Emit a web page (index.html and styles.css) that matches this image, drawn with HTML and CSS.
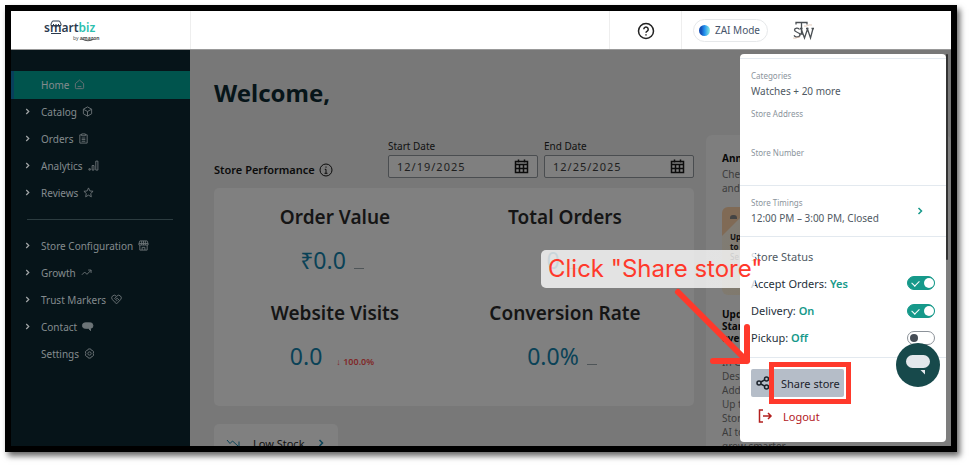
FILE: index.html
```html
<!DOCTYPE html>
<html lang="en">
<head>
    <meta charset="UTF-8">
    <meta name="viewport" content="width=device-width, initial-scale=1.0">
    <title>Smartbiz Dashboard</title>
    <link rel="stylesheet" href="styles.css">
</head>
<body>
<div class="frame">
    <!-- Top bar -->
    <header class="topbar">
        <div class="brand">
            <svg class="brand-roof" viewBox="0 0 12 14"><path d="M1 4 2.500 1h7L11 4M1 4v1.500h2.500V4M3.500 5.500H6V4M6 5.500h2.500V4M8.500 5.500H11V4M1 13.500h10"/></svg>
            <div class="brand-name">smart<span>biz</span></div>
            <div class="brand-by">by <b>amazon</b></div>
            <svg class="brand-smile" viewBox="0 0 14 4"><path d="M1 1q6 3.500 12 0"/></svg>
        </div>
        <button class="help" aria-label="Help">
            <svg viewBox="0 0 18 18"><circle cx="9" cy="9" r="7.500"/><path d="M6.800 7.200a2.200 2.200 0 1 1 3.400 1.900c-.9.5-1.200.9-1.200 1.700"/><path d="M9 12.300v1.200"/></svg>
        </button>
        <div class="account">
            <button class="zai"><span class="zai-dot"></span>ZAI Mode</button>
            <svg class="avatar" viewBox="0 0 22 22"><path d="M4 5.500V3.500h11v2M9.500 3.500V15M8 15h3"/><path d="M7.500 10.500c-1-2-5-1.700-5 .6 0 2.600 5.500 1.700 5.500 4.700 0 2.700-4.700 3-6 .6M9 9.500l3.500 9.500L15.500 10l3 9L21 9.500M8 9.500h2.500M14 9.500h2.500M19.500 9.500H22"/><path class="avatar-line" d="M12 7c3 1 4-2 8-1M1 19c3 1 4-1 7-1"/></svg>
        </div>
    </header>

    <div class="body">
        <!-- Sidebar -->
        <nav class="sidebar">
            <a class="nav-item active" href="#"><span class="nav-arrow"></span>Home
                <svg class="icon" viewBox="0 0 12 12"><path d="M1.500 5 6 1.200 10.500 5v4.500a1 1 0 0 1-1 1h-7a1 1 0 0 1-1-1zM4 8.300h4"/></svg></a>
            <a class="nav-item" href="#"><svg class="nav-arrow" viewBox="0 0 6 8"><path d="m1.500 1 3 3-3 3"/></svg>Catalog
                <svg class="icon" viewBox="0 0 12 12"><path d="M6 1 10.500 3.500v5L6 11 1.500 8.500v-5zM1.500 3.500 6 6l4.500-2.500M6 6v5"/></svg></a>
            <a class="nav-item" href="#"><svg class="nav-arrow" viewBox="0 0 6 8"><path d="m1.500 1 3 3-3 3"/></svg>Orders
                <svg class="icon" viewBox="0 0 12 12"><path d="M4 2H2v9h8V2H8M4 1h4v2H4zM4 5.500h4M4 7.200h4M4 9h4"/></svg></a>
            <a class="nav-item" href="#"><svg class="nav-arrow" viewBox="0 0 6 8"><path d="m1.500 1 3 3-3 3"/></svg>Analytics
                <svg class="icon" viewBox="0 0 12 12"><path d="M1 9.500h1.500V11H1zM4.500 6h2v5h-2zM8.500 1.200h2.300V11H8.500z"/></svg></a>
            <a class="nav-item" href="#"><svg class="nav-arrow" viewBox="0 0 6 8"><path d="m1.500 1 3 3-3 3"/></svg>Reviews
                <svg class="icon" viewBox="0 0 12 12"><path d="m6 1 1.500 3.300 3.500.4-2.600 2.400.7 3.600L6 8.900l-3.100 1.800.7-3.600L1 4.700l3.500-.4z"/></svg></a>
            <hr class="nav-line">
            <a class="nav-item" href="#"><svg class="nav-arrow" viewBox="0 0 6 8"><path d="m1.500 1 3 3-3 3"/></svg>Store Configuration
                <svg class="icon" viewBox="0 0 12 12"><path d="M2 1h8l1 3v1.500H1V4zM1 3.800h10M4 1v4.500M6 1v4.500M8 1v4.500M2 5.500V11h8V5.500M4.500 11V8h3v3"/></svg></a>
            <a class="nav-item" href="#"><svg class="nav-arrow" viewBox="0 0 6 8"><path d="m1.500 1 3 3-3 3"/></svg>Growth
                <svg class="icon" viewBox="0 0 12 12"><path d="m1 8.500 3-3 2.500 2.500L11 3.500M7.800 3.300H11v3.200"/></svg></a>
            <a class="nav-item" href="#"><svg class="nav-arrow" viewBox="0 0 6 8"><path d="m1.500 1 3 3-3 3"/></svg>Trust Markers
                <svg class="icon" viewBox="0 0 12 12"><path d="M6 10.800 1.600 6.200a2.800 2.800 0 0 1 4-4L6 2.600l.4-.4a2.800 2.800 0 0 1 4 4zM6 2.800 4 5l1 1 1.800-1.300 2.200 2M5.500 8 7 6.500"/></svg></a>
            <a class="nav-item" href="#"><svg class="nav-arrow" viewBox="0 0 6 8"><path d="m1.500 1 3 3-3 3"/></svg>Contact
                <svg class="icon solid" viewBox="0 0 12 12"><path d="M3.500 2h5a3 3 0 0 1 .8 6v2.500L7 8H3.500a3 3 0 0 1 0-6z"/></svg></a>
            <a class="nav-item" href="#"><span class="nav-arrow"></span>Settings
                <svg class="icon" viewBox="0 0 12 12"><circle cx="6" cy="6" r="1.800"/><path d="m4.800 1h2.400l.6 1.300 1.500.4 1.200 1.600-.5 1.700.5 1.700-1.200 1.600-1.500.4L7.200 11H4.800l-.6-1.300-1.500-.4-1.200-1.600L2 6l-.5-1.700 1.200-1.600 1.500-.4z"/></svg></a>
        </nav>

        <!-- Dashboard -->
        <main class="main">
            <h1>Welcome,</h1>
            <div class="columns">
                <section class="performance">
                    <div class="filters">
                        <h2>Store Performance
                            <svg class="info" viewBox="0 0 14 14"><circle cx="7" cy="7" r="6"/><path d="M7 3.500v1.200M5.800 6.300H7v4M5.500 10.300h3"/></svg>
                        </h2>
                        <div class="field">
                            <label for="start-date">Start Date</label>
                            <div class="date-box">
                                <input type="text" id="start-date" value="12/19/2025">
                                <svg class="calendar" viewBox="0 0 15 15"><path d="M1.500 2.500h12v11h-12zM1.500 5.500h12M1.500 9.500h12M5.500 5v8.500M9.500 5v8.500M4.500.500v3M10.500.500v3"/></svg>
                            </div>
                        </div>
                        <div class="field">
                            <label for="end-date">End Date</label>
                            <div class="date-box">
                                <input type="text" id="end-date" value="12/25/2025">
                                <svg class="calendar" viewBox="0 0 15 15"><path d="M1.500 2.500h12v11h-12zM1.500 5.500h12M1.500 9.500h12M5.500 5v8.500M9.500 5v8.500M4.500.500v3M10.500.500v3"/></svg>
                            </div>
                        </div>
                    </div>
                    <div class="stats">
                        <div class="stat">
                            <h3>Order Value</h3>
                            <div class="value">₹0.0 <span class="flat"></span></div>
                        </div>
                        <div class="stat">
                            <h3>Total Orders</h3>
                            <div class="value">0 <span class="flat"></span></div>
                        </div>
                        <div class="stat">
                            <h3>Website Visits</h3>
                            <div class="value">0.0 <span class="drop">↓ 100.0%</span></div>
                        </div>
                        <div class="stat">
                            <h3>Conversion Rate</h3>
                            <div class="value">0.0% <span class="flat"></span></div>
                        </div>
                    </div>
                    <button class="low-stock">
                        <svg viewBox="0 0 14 10"><path d="m1 2 3 3.500L6.500 3 12 8M13 3.500V8.500H8.500"/></svg>
                        Low Stock
                        <svg class="go" viewBox="0 0 6 8"><path d="m1.500 1 3 3-3 3"/></svg>
                    </button>
                </section>
                <aside class="news">
                    <h4>Announcements</h4>
                    <p>Check out<br>and more</p>
                    <div class="news-card">
                        <span class="news-cloud"></span>
                        <b>Up<br>to</b>
                        <span>Se</span>
                    </div>
                    <h4>Update<br>Start<br>every</h4>
                    <p class="news-list">In Ca<br>Des<br>Add<br>Up to<br>Store<br>AI to<br>grow smarter</p>
                </aside>
            </div>
        </main>
    </div>

    <!-- Store menu -->
    <section class="panel">
        <div class="panel-block details">
            <small>Categories</small>
            <p>Watches + 20 more</p>
            <small class="address">Store Address</small>
            <small>Store Number</small>
        </div>
        <div class="panel-block timings">
            <div>
                <small>Store Timings</small>
                <p>12:00 PM – 3:00 PM, Closed</p>
            </div>
            <svg class="go" viewBox="0 0 6 8"><path d="m1.500 1 3 3-3 3"/></svg>
        </div>
        <div class="panel-block status">
            <h5>Store Status</h5>
            <div class="toggle-row">
                <label for="accept">Accept Orders: <b>Yes</b></label>
                <input type="checkbox" class="toggle" id="accept" checked>
            </div>
            <div class="toggle-row">
                <label for="delivery">Delivery: <b>On</b></label>
                <input type="checkbox" class="toggle" id="delivery" checked>
            </div>
            <div class="toggle-row">
                <label for="pickup">Pickup: <b>Off</b></label>
                <input type="checkbox" class="toggle" id="pickup">
            </div>
        </div>
        <div class="panel-block actions">
            <button class="share">
                <svg viewBox="0 0 14 14"><circle cx="3" cy="7" r="2"/><circle cx="10.500" cy="3" r="2"/><circle cx="10.500" cy="11" r="2"/><path d="m4.800 6 4-2.100M4.800 8l4 2.100"/></svg>
                Share store
            </button>
            <button class="logout">
                <svg viewBox="0 0 14 14"><path d="M5 1H1.500v12H5M5 7h8M10 4l3 3-3 3"/></svg>
                Logout
            </button>
        </div>
    </section>
    <span class="scrollbar"></span>

    <button class="chat" aria-label="Chat">
        <svg viewBox="0 0 24 20"><path d="M6.500 0h11a6.500 6.500 0 0 1 0 13h-11a6.500 6.500 0 0 1 0-13zM14.500 15H19v4.500z"/></svg>
    </button>

    <!-- Guide overlay -->
    <div class="callout">Click "Share store"</div>
    <svg class="arrow" viewBox="0 0 80 80"><path d="m4 5 69 69M73 40v34H39"/></svg>
    <span class="highlight"></span>
</div>
</body>
</html>
```

FILE: styles.css
```css
* {
    box-sizing: border-box;
    margin: 0;
    padding: 0;
    font-family: "Noto Sans", "Open Sans", sans-serif;
}

body {
    padding: 5px 13px 13px 5px;
    background: #fff;
    font-size: 10px;
}

svg {
    fill: none;
    stroke: currentColor;
    overflow: visible;
    flex-shrink: 0;
}

button {
    border: none;
    background: none;
    cursor: pointer;
}

.frame {
    position: relative;
    height: calc(100vh - 18px);
    display: flex;
    flex-direction: column;
    border: 6px solid #000;
    background: #797979;
    box-shadow: 3px 4px 6px rgba(0, 0, 0, 0.6);
    overflow: hidden;
}

/* Top bar */
.topbar {
    height: 39px;
    display: flex;
    flex-shrink: 0;
    background: #fff;
    border-bottom: 1px solid #999;
}

.brand {
    position: relative;
    width: 180px;
    padding: 10px 0 0 33px;
    border-right: 1px solid #eee;
    margin-right: auto;
}

.brand-name {
    font-size: 12px;
    line-height: 14px;
    font-weight: 600;
    color: #2b3a4d;
}

.brand-name span {
    color: #2cc0ae;
}

.brand-by {
    padding-left: 29px;
    font-size: 5px;
    line-height: 6px;
    color: #555;
}

.brand-roof {
    position: absolute;
    left: 39px;
    top: 9px;
    width: 12px;
    height: 14px;
    color: #2b3a4d;
}

.brand-smile {
    position: absolute;
    left: 70px;
    top: 27px;
    width: 14px;
    height: 4px;
    color: #555;
}

.help {
    width: 73px;
    border-left: 1px solid #eee;
    border-right: 1px solid #eee;
    color: #222;
}

.help svg {
    width: 18px;
    height: 18px;
    stroke-width: 1.5;
    vertical-align: middle;
}

.account {
    width: 269px;
    padding-left: 11px;
    display: flex;
    align-items: center;
    gap: 24px;
}

.zai {
    display: flex;
    align-items: center;
    gap: 5px;
    height: 23px;
    padding: 0 7px 0 5px;
    border: 1px solid #e6e8ea;
    border-radius: 12px;
    font-size: 10px;
    color: #46546a;
}

.zai-dot {
    width: 11px;
    height: 11px;
    border-radius: 50%;
    background: linear-gradient(90deg, #1450b8 20%, #2290ee 50%, #8ff0e0);
}

.avatar {
    width: 22px;
    height: 22px;
    stroke-width: 1.3;
    color: #4b5054;
}

.avatar-line {
    stroke: #d8b8a0;
    stroke-width: 0.7;
}

.body {
    display: flex;
    flex: 1;
    min-height: 0;
}

/* Sidebar */
.sidebar {
    width: 179px;
    flex-shrink: 0;
    padding-top: 21px;
    background: #061419;
}

.nav-item {
    display: flex;
    align-items: center;
    height: 28px;
    padding-left: 14px;
    color: #848b8e;
    font-size: 10px;
    text-decoration: none;
    margin-bottom: -1px;
    padding-bottom: 1px;
}

.nav-item.active {
    background: #00544d;
    box-shadow: inset 5px 0 0 -2px #083f5c;
    margin-bottom: -1px;
}

.nav-arrow {
    width: 5px;
    height: 7px;
    margin-right: 11px;
    stroke-width: 1.5;
    color: #a0a4a6;
}

.icon {
    width: 11px;
    height: 11px;
    margin-left: 5px;
    color: #6c7477;
}

.icon.solid {
    fill: currentColor;
}

.nav-line {
    margin: 13px 17px 12px 16px;
    border: none;
    border-top: 1px solid #2c3c40;
}

/* Dashboard */
.main {
    flex: 1;
    min-width: 0;
    padding: 27px 0 0 24px;
    background: #787878;
    overflow: hidden;
}

h1 {
    font-size: 24px;
    line-height: 32px;
    font-weight: 700;
    color: #071519;
}

.columns {
    display: flex;
    gap: 12px;
}

.performance {
    width: 480px;
    padding-top: 30px;
    flex-shrink: 0;
}

.filters {
    display: flex;
    align-items: flex-end;
    gap: 6px;
}

h2 {
    flex: 1;
    display: flex;
    align-items: center;
    gap: 4px;
    font-size: 11px;
    line-height: 16px;
    font-weight: 600;
    color: #0b0b0b;
    white-space: nowrap;
}

.info {
    width: 14px;
    height: 14px;
}

.field {
    width: 150px;
}

.field label {
    display: block;
    font-size: 10px;
    line-height: 14px;
    color: #111;
    margin-bottom: 2px;
}

.date-box {
    display: flex;
    align-items: center;
    height: 23px;
    padding: 0 8px;
    border: 1px solid #4a4d50;
    border-radius: 2px;
    background: #7f7f7f;
}

.date-box input {
    flex: 1;
    min-width: 0;
    border: none;
    background: none;
    font-size: 11px;
    letter-spacing: 1px;
    color: #1e1e1e;
}

.calendar {
    width: 15px;
    height: 15px;
    stroke-width: 1.5;
    color: #0c0c0c;
}

.stats {
    display: grid;
    grid-template-columns: 1fr 1fr;
    margin-top: 10px;
    padding: 15px 14px 11px 6px;
    border-radius: 5px;
    background: #808080;
}

.stat {
    height: 96px;
    text-align: center;
}

.stat h3 {
    font-size: 19px;
    line-height: 28px;
    font-weight: 600;
    color: #151515;
}

.value {
    display: flex;
    justify-content: center;
    align-items: baseline;
    gap: 8px;
    margin-top: 14px;
    padding-right: 6px;
    font-size: 23px;
    line-height: 30px;
    color: #0a4257;
}

.flat {
    width: 10px;
    height: 1px;
    background: #4f5558;
}

.drop {
    margin-left: 6px;
    font-size: 9px;
    font-weight: 600;
    color: #802828;
}

.low-stock {
    display: flex;
    align-items: center;
    gap: 13px;
    height: 38px;
    margin-top: 18px;
    padding: 0 14px 0 12px;
    border-radius: 5px;
    background: #808080;
    font-size: 11px;
    color: #111;
}

.low-stock svg {
    width: 14px;
    height: 10px;
    color: #0a4257;
}

.low-stock .go {
    width: 6px;
    height: 8px;
    stroke-width: 1.5;
}

.news {
    flex: 1;
    margin-top: 26px;
    align-self: flex-start;
    padding: 4px 16px 0;
    border-radius: 6px;
    background: #7e7e7e;
}

.news h4 {
    padding-top: 13px;
    font-size: 10px;
    line-height: 12px;
    color: #080808;
}

.news p {
    color: #3c3c3c;
    line-height: 14px;
}

.news > p:first-of-type {
    margin-top: 3px;
}

.news-card {
    height: 88px;
    margin-top: 12px;
    padding: 8px;
    border-radius: 6px;
    background: linear-gradient(135deg, #806a55 20px, #807c74 21px, #80725d);
    font-size: 8px;
    line-height: 10px;
    color: #111;
}

.news-cloud {
    display: block;
    width: 7px;
    height: 4px;
    margin-bottom: 13px;
    border-radius: 3px 3px 0 0;
    background: #444;
}

.news-card b {
    display: block;
}

.news .news-list {
    margin-top: 11px;
    padding-bottom: 10px;
}

/* Store menu */
.panel {
    position: absolute;
    top: 43px;
    right: 5px;
    width: 206px;
    padding-top: 4px;
    border-radius: 4px;
    background: #fff;
    color: #4f5963;
}

.panel-block {
    padding: 0 11px;
    border-top: 1px solid #e3e9ef;
}

.panel small {
    display: block;
    font-size: 8px;
    line-height: 12px;
    color: #8b949c;
}

.panel p {
    font-size: 10px;
    line-height: 16px;
    margin-top: 1px;
}

.details {
    height: 127px;
    padding-top: 11px;
}

.details .address {
    margin: 9px 0 27px;
}

.timings {
    display: flex;
    justify-content: space-between;
    align-items: center;
    height: 51px;
    padding-right: 23px;
}

.panel .go {
    width: 6px;
    height: 8px;
    stroke-width: 1.5;
    color: #16998a;
}

.status {
    height: 121px;
    padding-top: 12px;
}

.status h5 {
    font-size: 11px;
    line-height: 16px;
    font-weight: 400;
    margin-bottom: 4px;
}

.toggle-row {
    display: flex;
    justify-content: space-between;
    align-items: center;
    height: 28px;
    font-size: 11px;
    color: #26303a;
}

.toggle-row + .toggle-row {
    height: 27px;
}

.toggle-row b {
    font-weight: 600;
    color: #16998a;
}

.toggle {
    appearance: none;
    position: relative;
    width: 28px;
    height: 14px;
    border: 1px solid #8c9299;
    border-radius: 7px;
    background: #fff;
}

.toggle::after {
    content: "";
    position: absolute;
    left: 2px;
    top: 2px;
    width: 8px;
    height: 8px;
    border-radius: 50%;
    background: #454c55;
}

.toggle:checked {
    border-color: #16998a;
    background: #16998a;
}

.toggle:checked::after {
    left: 16px;
    top: 1px;
    width: 10px;
    height: 10px;
    background: #fff;
}

.toggle:checked::before {
    content: "";
    position: absolute;
    left: 4px;
    top: 3px;
    width: 6px;
    height: 4px;
    border-left: 1px solid #fff;
    border-bottom: 1px solid #fff;
    transform: rotate(-45deg);
}

.actions {
    padding-top: 11px;
    padding-bottom: 12px;
    display: flex;
    flex-direction: column;
    align-items: flex-start;
    gap: 5px;
}

.actions button {
    display: flex;
    align-items: center;
    gap: 11px;
    font-size: 11px;
}

.actions svg {
    width: 14px;
    height: 14px;
    stroke-width: 1.5;
}

.share {
    height: 28px;
    padding: 0 4px 0 5px;
    border-radius: 2px;
    background: #b5bdc8;
    color: #1c232b;
}

.logout {
    height: 28px;
    padding-left: 7px;
    color: #b3201f;
}

.scrollbar {
    position: absolute;
    top: 43px;
    right: 3px;
    width: 2px;
    height: 206px;
    border-radius: 2px;
    background: #333;
}

.chat {
    position: absolute;
    right: 11px;
    bottom: 59px;
    width: 44px;
    height: 44px;
    border-radius: 50%;
    background: #17494b;
}

.chat svg {
    width: 24px;
    height: 20px;
    fill: #e4e8ec;
    stroke: none;
    vertical-align: middle;
}

/* Guide overlay */
.callout {
    position: absolute;
    right: 187px;
    top: 239px;
    width: 223px;
    height: 38px;
    padding-left: 7px;
    border-radius: 5px;
    background: linear-gradient(90deg, rgba(255, 255, 255, 0.78) 214px, transparent 214px);
    color: #ff392b;
    font-family: Inter, Lato, sans-serif;
    font-size: 24px;
    line-height: 38px;
    white-space: nowrap;
}

.arrow {
    position: absolute;
    right: 197px;
    top: 276px;
    width: 80px;
    height: 80px;
    color: #ff392b;
    stroke-width: 6;
    stroke-linecap: round;
    stroke-linejoin: round;
}

.highlight {
    position: absolute;
    right: 100px;
    top: 351px;
    width: 82px;
    height: 42px;
    border: 5px solid #ff392b;
}
```
